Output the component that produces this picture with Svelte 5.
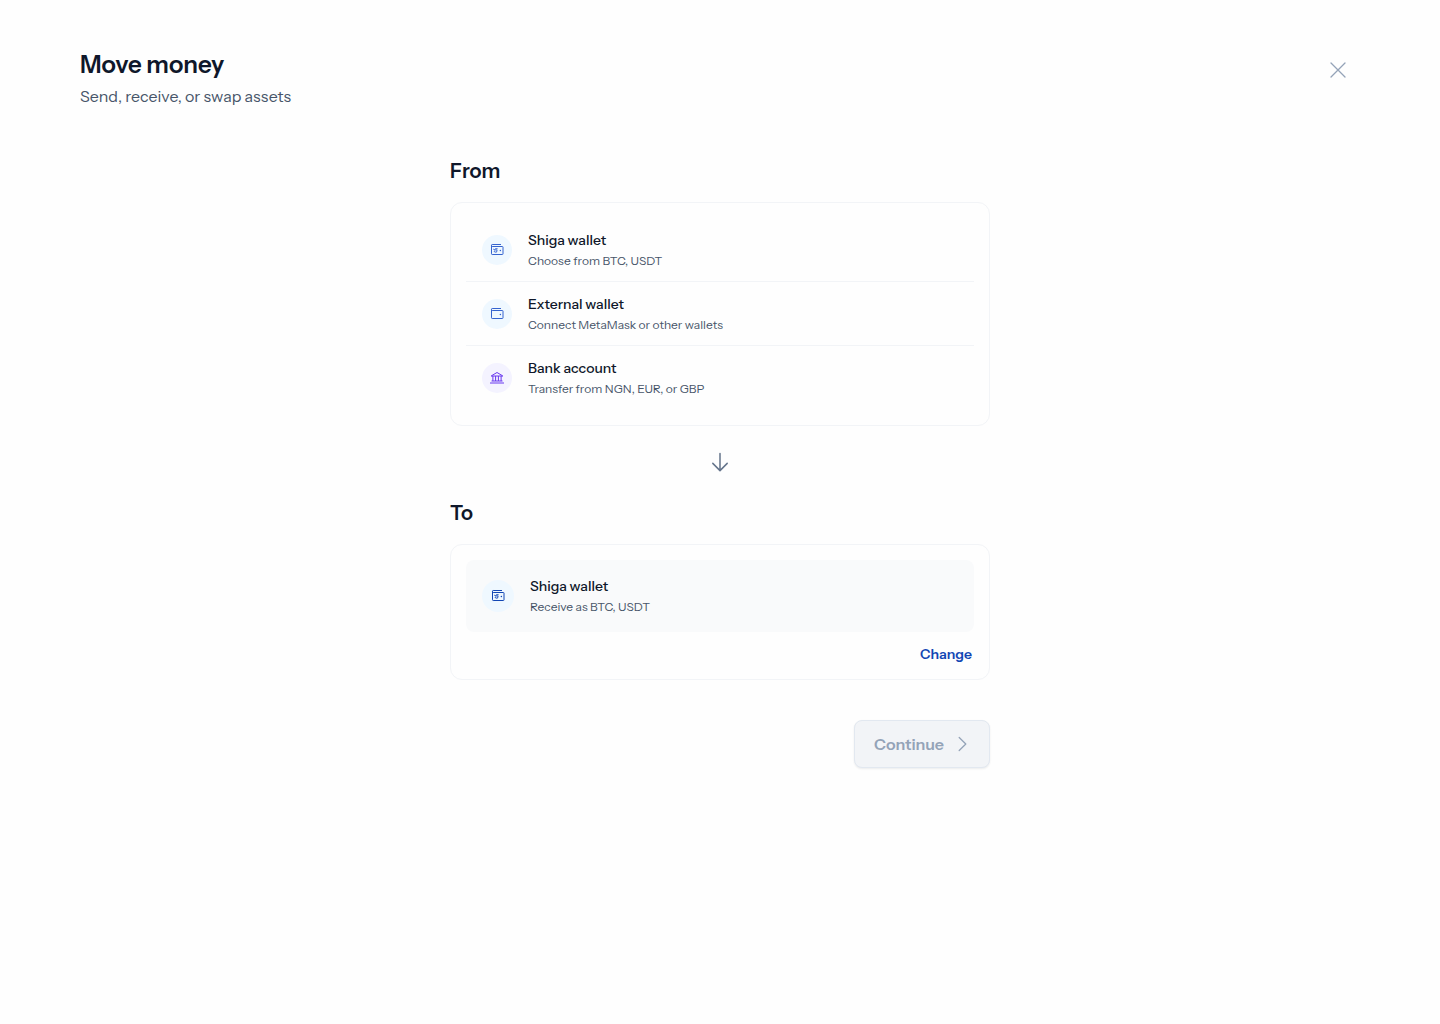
<script lang="ts">
  const sources = [
    { id: "shiga", title: "Shiga wallet", detail: "Choose from BTC, USDT" },
    { id: "external", title: "External wallet", detail: "Connect MetaMask or other wallets" },
    { id: "bank", title: "Bank account", detail: "Transfer from NGN, EUR, or GBP" },
  ];
</script>

{#snippet walletIcon(branded: boolean)}
  <svg class="wallet" width="14" height="14" viewBox="0 0 14 14" fill="none" stroke="currentColor">
    <path d="M11 1.5H2.2a.7.7 0 0 0-.7.7v8.6a.7.7 0 0 0 .7.7h10.2a.6.6 0 0 0 .6-.6V4.1a.6.6 0 0 0-.6-.6H2.2a.7.7 0 0 1-.7-.7" />
    <circle class="dot" cx="10.4" cy="7.5" r="0.75" />
    {#if branded}
      <path class="mark" d="M7.6 5.7H5.4L4.5 6.9h2.6L6.6 9.1H4.7M3.2 6l1.5 1.2M3.8 8l1.1 1.1" />
    {/if}
  </svg>
{/snippet}

{#snippet bankIcon()}
  <svg width="14" height="14" viewBox="0 0 14 14" fill="none" stroke="currentColor">
    <path d="M0 12h14M1.5 10h11M1 5h12M1.4 4.8 7 1.5l5.6 3.3M2.9 5v5M5.6 5v5M8.4 5v5M11.1 5v5" />
  </svg>
{/snippet}

<div class="page">
  <header class="header">
    <div>
      <h1 class="page-title">Move money</h1>
      <p class="subtitle">Send, receive, or swap assets</p>
    </div>
    <button class="close" aria-label="Close">
      <svg width="20" height="20" viewBox="0 0 20 20" fill="none" stroke="currentColor" stroke-width="1.3" stroke-linecap="round">
        <path d="m3 3 14 14M17 3 3 17" />
      </svg>
    </button>
  </header>

  <main class="content">
    <h2 class="section-title">From</h2>
    <div class="card sources">
      {#each sources as source (source.id)}
        <button class="row">
          <span class="avatar" class:purple={source.id === "bank"}>
            {#if source.id === "bank"}
              {@render bankIcon()}
            {:else}
              {@render walletIcon(source.id === "shiga")}
            {/if}
          </span>
          <span class="labels">
            <span class="name">{source.title}</span>
            <span class="detail">{source.detail}</span>
          </span>
        </button>
      {/each}
    </div>

    <div class="arrow">
      <svg width="24" height="24" viewBox="0 0 24 24" fill="none" stroke="currentColor" stroke-width="1.5" stroke-linecap="round" stroke-linejoin="round">
        <path d="M12 3.5v17M4.8 13.4l7.2 7.2 7.2-7.2" />
      </svg>
    </div>

    <h2 class="section-title">To</h2>
    <div class="card target">
      <div class="selected">
        <span class="avatar large">{@render walletIcon(true)}</span>
        <span class="labels">
          <span class="name">Shiga wallet</span>
          <span class="detail">Receive as BTC, USDT</span>
        </span>
      </div>
      <button class="change">Change</button>
    </div>

    <button class="continue" disabled>
      <span>Continue</span>
      <svg width="20" height="20" viewBox="0 0 20 20" fill="none" stroke="currentColor" stroke-width="1.3" stroke-linecap="round" stroke-linejoin="round">
        <path d="m7.2 3.5 6.6 6.5-6.6 6.5" />
      </svg>
    </button>
  </main>
</div>

<style>
  :global(body) {
    background: #fefefe;
  }
  .page {
    min-height: 1024px;
    box-sizing: border-box;
    padding: 48px 80px;
    font-family: "Instrument Sans", Inter, "Liberation Sans", sans-serif;
    color: #0f172a;
  }
  h1,
  h2,
  p {
    margin: 0;
  }
  button {
    padding: 0;
    border: none;
    background: none;
    font: inherit;
    color: inherit;
    text-align: left;
    cursor: pointer;
  }
  svg {
    display: block;
  }
  .header {
    display: flex;
    align-items: flex-start;
    justify-content: space-between;
  }
  .page-title {
    font-size: 24px;
    line-height: 34px;
    font-weight: 600;
  }
  .subtitle {
    margin-top: 2px;
    font-size: 16px;
    line-height: 24px;
    color: #475569;
  }
  .close {
    margin: 12px 12px 0 0;
    color: #94a3b8;
  }
  .content {
    display: flex;
    flex-direction: column;
    width: 540px;
    margin: 48px auto 0;
  }
  .section-title {
    font-size: 20px;
    line-height: 30px;
    font-weight: 600;
  }
  .card {
    box-sizing: border-box;
    margin-top: 16px;
    padding: 15px;
    border: 1px solid #f2f4f7;
    border-radius: 12px;
  }
  .sources {
    height: 224px;
  }
  .row {
    display: flex;
    align-items: center;
    gap: 16px;
    width: 100%;
    height: 64px;
    padding: 0 16px;
    box-sizing: border-box;
    border-bottom: 1px solid #f2f4f7;
  }
  .row:last-child {
    border-bottom-color: transparent;
  }
  .avatar {
    display: flex;
    flex: none;
    align-items: center;
    justify-content: center;
    width: 30px;
    height: 30px;
    border-radius: 50%;
    background: #eff8ff;
    color: #3563cf;
  }
  .avatar.purple {
    background: #f4f3ff;
    color: #6938ef;
  }
  .avatar.large {
    width: 32px;
    height: 32px;
    color: #1246b4;
  }
  .wallet .dot {
    fill: currentColor;
    stroke: none;
  }
  .wallet .mark {
    stroke-width: 0.9;
  }
  .labels {
    display: flex;
    flex-direction: column;
    gap: 2px;
  }
  .name {
    font-size: 14px;
    line-height: 20px;
    font-weight: 500;
  }
  .detail {
    font-size: 12px;
    line-height: 18px;
    color: #475569;
  }
  .arrow {
    display: flex;
    justify-content: center;
    padding: 24px 0;
    color: #64748b;
  }
  .target {
    height: 136px;
  }
  .selected {
    display: flex;
    align-items: center;
    gap: 16px;
    height: 72px;
    padding: 0 16px;
    border-radius: 8px;
    background: #f9fafb;
  }
  .change {
    display: block;
    margin: 12px 2px 0 auto;
    font-size: 14px;
    line-height: 20px;
    font-weight: 600;
    color: #1246b4;
  }
  .continue {
    display: flex;
    align-items: center;
    justify-content: space-between;
    align-self: flex-end;
    box-sizing: border-box;
    width: 136px;
    height: 48px;
    margin-top: 40px;
    padding: 0 17px 0 19px;
    border: 1px solid #e2e8f0;
    border-radius: 8px;
    background: #f2f4f7;
    box-shadow: 0 1px 2px rgba(16, 24, 40, 0.08);
    font-size: 16px;
    line-height: 24px;
    font-weight: 600;
    color: #94a3b8;
    cursor: default;
  }
</style>
